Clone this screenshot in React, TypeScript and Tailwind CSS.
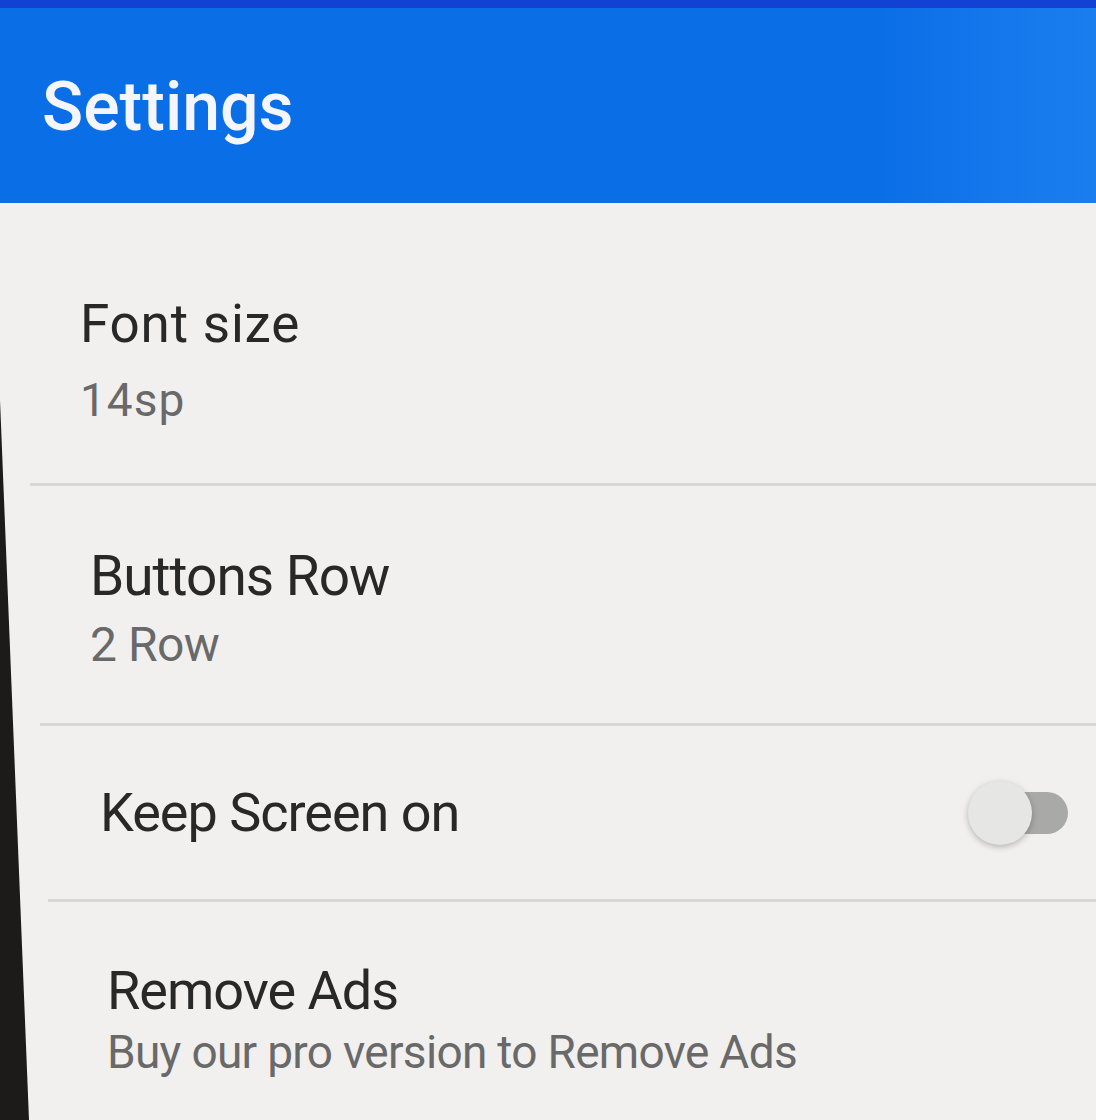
const rows = [
  { title: 'Font size', summary: '14sp' },
  { title: 'Buttons Row', summary: '2 Row' },
];

function Toggle() {
  return (
    <div className="relative w-[104px] h-[68px] flex items-center">
      <div className="absolute right-[2px] w-[62px] h-[42px] rounded-full bg-[#a9a9a7]" />
      <div className="absolute left-[2px] w-[64px] h-[64px] rounded-full bg-[#e6e6e4] shadow-[0_2px_6px_rgba(0,0,0,0.25)]" />
    </div>
  );
}

export default function App() {
  return (
    <div className="w-[1096px] h-[1120px] overflow-hidden bg-[#f1f0ee] font-['Roboto',sans-serif] flex flex-col">
      <header className="h-[203px] shrink-0 bg-linear-to-r from-[#0a6ee7] from-80% to-[#1b7eef] flex flex-col">
        <div className="h-[8px] bg-[#1142d4]" />
        <h1 className="pt-[59px] pl-[42px] text-[68px] leading-[80px] font-medium text-[#f4f6fb]">
          Settings
        </h1>
      </header>

      <div className="flex-1 flex">
        {/* phone bezel creeping in from the left edge */}
        <div className="w-[29px] shrink-0 bg-[#1d1b1a] [clip-path:polygon(0_21.5%,0_21.5%,100%_100%,0_100%)]" />

        <div className="flex-1 flex flex-col">
          <div className="h-[280px] pt-[91px] pl-[51px]">
            <div className="text-[53px] leading-[60px] tracking-[0.8px] text-[#282828]">{rows[0].title}</div>
            <div className="mt-[20px] text-[46px] leading-[52px] tracking-[1px] text-[#696969]">{rows[0].summary}</div>
          </div>
          <div className="h-[3px] ml-[1px] bg-[#d8d7d5]" />

          <div className="h-[237px] pt-[58px] pl-[61px]">
            <div className="text-[55px] leading-[64px] tracking-[-1px] text-[#282828]">{rows[1].title}</div>
            <div className="mt-[9px] text-[48px] leading-[56px] tracking-[-0.5px] text-[#696969]">{rows[1].summary}</div>
          </div>
          <div className="h-[3px] ml-[11px] bg-[#d8d7d5]" />

          <div className="h-[173px] pl-[71px] pr-[26px] flex items-center justify-between">
            <div className="text-[54px] leading-[64px] tracking-[-1px] text-[#282828]">Keep Screen on</div>
            <Toggle />
          </div>
          <div className="h-[3px] ml-[19px] bg-[#d8d7d5]" />

          <div className="flex-1 pt-[57px] pl-[78px]">
            <div className="text-[54px] leading-[64px] tracking-[-1px] text-[#282828]">Remove Ads</div>
            <div className="mt-[1px] text-[46px] leading-[56px] tracking-[-0.7px] text-[#696969]">
              Buy our pro version to Remove Ads
            </div>
          </div>
        </div>
      </div>
    </div>
  );
}
